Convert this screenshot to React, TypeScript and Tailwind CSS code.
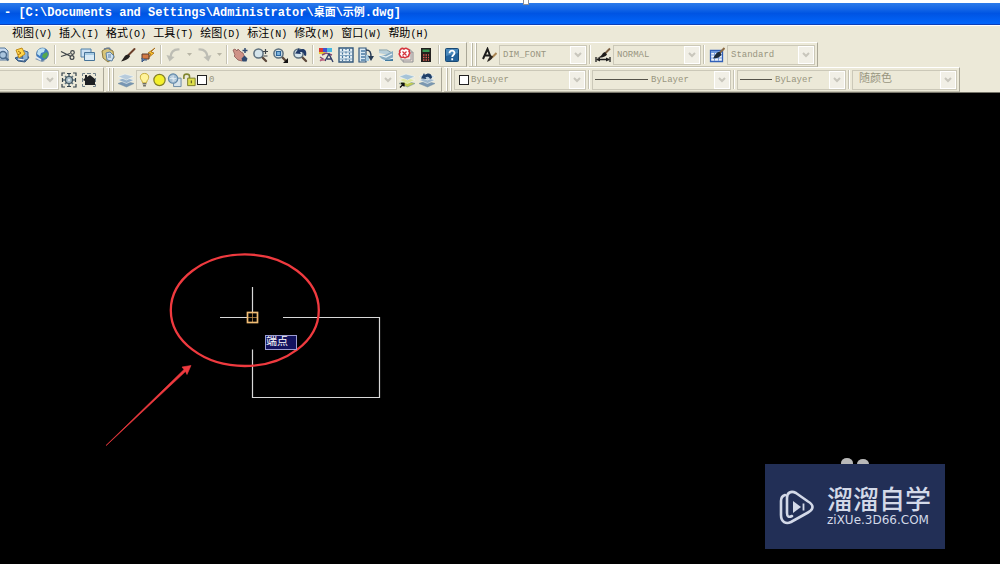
import React from 'react';
import clsx from 'clsx';

interface IconProps {
  children: React.ReactNode;
}

const Icon: React.FC<IconProps> = ({ children }) => (
  <svg viewBox="0 0 16 16" className="size-4 shrink-0" fill="none" aria-hidden="true">
    {children}
  </svg>
);

const stack = (top: string, mid: string, low: string) => (
  <>
    <path d="M0 11.500l7-2.500 9 2.500-7.500 3.500z" fill={low} stroke="#6d8aa0" strokeWidth=".5" />
    <path d="M0 8l7-2.500 9 2.500-7.500 3.500z" fill={mid} stroke="#f4f6f2" strokeWidth=".6" />
    <path d="M0 4.500L7 2l9 2.500L8.500 8z" fill={top} stroke="#f4f6f2" strokeWidth=".6" />
  </>
);

const lens = (
  <>
    <path d="M9.500 9.500l4.500 4.500" stroke="#5d4a3c" strokeWidth="2.400" strokeLinecap="round" />
    <circle cx="6.500" cy="6.500" r="4.600" fill="#d5e4ea" stroke="#5c6f7d" strokeWidth="1.500" />
  </>
);

const icons = {
  preview: (
    <Icon>
      <path d="M2 1h9l3 3v9H2z" fill="#c9dbef" stroke="#55779b" />
      <circle cx="9" cy="8" r="3.500" fill="#a9c4dd" stroke="#4b6a8c" strokeWidth="1.400" />
      <path d="M11.500 10.500l3 3" stroke="#4b6a8c" strokeWidth="2" />
    </Icon>
  ),
  publish: (
    <Icon>
      <path d="M1 11l5-2 9 1-4 5-7-1z" fill="#557fae" stroke="#35577e" />
      <path d="M8 3l6 2v7l-5 2z" fill="#8eb4d6" stroke="#42658d" />
      <path d="M2 3l6-2 3 6-6 4z" fill="#ffd64c" stroke="#c08b18" />
      <path d="M4 4l3 2-3 2" stroke="#a46a10" />
      <path d="M4 12l6 1" stroke="#fff" />
    </Icon>
  ),
  globe: (
    <Icon>
      <path d="M1 12l4-2 6 4-3 1z" fill="#7e96b0" />
      <circle cx="8.500" cy="7" r="6" fill="#3d7cc2" stroke="#2c5c94" strokeWidth=".6" />
      <path d="M4 3c3-2 6-2 7-1l-1 3-3 1-1 3-3-2z" fill="#bfe2f2" />
      <path d="M9 7l4-2 1 3-3 4-3-2z" fill="#55a84e" />
      <path d="M2 10l5 3" stroke="#dfe9f2" strokeWidth="1.600" />
    </Icon>
  ),
  cut: (
    <Icon>
      <path d="M1 4.500l10 5M1 9.500l9-3" stroke="#3e4448" strokeWidth="1.300" />
      <circle cx="12.500" cy="5.500" r="1.800" stroke="#3e4448" strokeWidth="1.200" />
      <circle cx="12" cy="10.500" r="1.900" stroke="#3e4448" strokeWidth="1.200" />
    </Icon>
  ),
  copy: (
    <Icon>
      <path d="M1 2h10v8H1z" fill="#cbe0f2" stroke="#5180a8" />
      <path d="M4.500 5.500h10v8h-10z" fill="#d9eaf5" stroke="#467398" />
      <path d="M5 6h9v2H5z" fill="#a6cbe4" />
    </Icon>
  ),
  paste: (
    <Icon>
      <path d="M2 4l5-3 6 3 1 7-6 4-5-4z" fill="#d8c57a" stroke="#8c7a42" />
      <path d="M4 2l5-1 2 2" stroke="#6e7f92" strokeWidth="1.500" />
      <path d="M6 6l4-1 4 4-2 5-5-1z" fill="#cfe0ef" stroke="#5d81a4" />
      <path d="M8 8h3M8 10h3" stroke="#5d81a4" />
    </Icon>
  ),
  brush: (
    <Icon>
      <path d="M14.500 2L8 8.500" stroke="#6b3f2a" strokeWidth="2" strokeLinecap="round" />
      <path d="M9 7.500l1 2c-2 3-5 4-9 5 2-2 3-5 5-6.500z" fill="#26221f" />
    </Icon>
  ),
  match: (
    <Icon>
      <path d="M15 1L8 6l3 1-4 5 7-6-3-1z" fill="#ffc928" stroke="#a46612" strokeWidth=".8" />
      <path d="M2 7h7v5H2z" fill="#d37a45" stroke="#5a3a2c" />
      <path d="M2 11v4l2-2h3" fill="#5f7fae" stroke="#39557e" />
    </Icon>
  ),
  undo: (
    <Icon>
      <path d="M13.500 2.500C8 2 5 5 4.500 10" stroke="#bdbdb4" strokeWidth="2.200" />
      <path d="M.500 8l8 2-5 4.500z" fill="#bdbdb4" />
    </Icon>
  ),
  redo: (
    <Icon>
      <path d="M2.500 2.500C8 2 11 5 11.500 10" stroke="#bdbdb4" strokeWidth="2.200" />
      <path d="M15.500 8l-8 2 5 4.500z" fill="#bdbdb4" />
    </Icon>
  ),
  pan: (
    <Icon>
      <path d="M1 3l2-1 2 2 1-2 3 3 2 1 2 5-3 3-4-1-4-4 1-1z" fill="#cf9287" stroke="#8c5a55" strokeWidth=".8" />
      <path d="M13 1v5M10.500 3.500h5" stroke="#304a70" strokeWidth="1.500" />
      <path d="M12.500 8.500l3 3-1 3h-4l-1-3z" fill="#304a70" />
    </Icon>
  ),
  zoomRealtime: (
    <Icon>
      {lens}
      <path d="M13.500 2v5M11 4.500h5M11.500 9h4" stroke="#3f4549" strokeWidth="1.200" />
    </Icon>
  ),
  zoomWindow: (
    <Icon>
      {lens}
      <path d="M4.500 4.500h4v4h-4z" fill="#7fb4dd" stroke="#2c669c" strokeWidth="1.200" />
      <path d="M16 11v5h-5z" fill="#111" />
    </Icon>
  ),
  zoomPrevious: (
    <Icon>
      {lens}
      <path d="M14 9c1.500-6-2.500-8.500-6.500-6L7 1 3 6.500l6 .500-1-1.800c2.500-1 4 .800 4 3z" fill="#203a68" />
    </Icon>
  ),
  properties: (
    <Icon>
      <path d="M1 1h4v4H1z" fill="#d93636" />
      <path d="M5 1h4v4H5z" fill="#4352cf" />
      <path d="M9 1h5v4H9z" fill="#46b7e0" />
      <path d="M1 5h6v2H1z" fill="#e7c833" />
      <path d="M4 8l4-2 6 2M2 10l3 2-3 2" stroke="#8a4a70" strokeWidth="1.500" />
      <path d="M7 14l4-7 4 8M9 12h5" stroke="#323d66" strokeWidth="1.400" />
      <path d="M2 13h5" stroke="#c46a82" strokeWidth="1.500" />
    </Icon>
  ),
  designCenter: (
    <Icon>
      <path d="M1 1h14v14H1z" fill="#e7f1f6" stroke="#33587c" strokeWidth="1.400" />
      <path d="M4.500 2v12M8 1v14M11.500 2v12" stroke="#44729a" strokeWidth="1.200" strokeDasharray="2 1.500" />
      <path d="M2 5h12M2 8.500h12M2 12h12" stroke="#6c95b5" strokeWidth=".8" />
    </Icon>
  ),
  toolPalettes: (
    <Icon>
      <path d="M1 1h7v14H1z" fill="#d9e9f3" stroke="#33587c" strokeWidth="1.200" />
      <path d="M3 4h4M3 7h4M3 10h4M3 13h4" stroke="#4b7ba4" strokeWidth="1.500" />
      <path d="M8 8h3v6H8z" fill="#a5c9de" />
      <path d="M8 3c4 0 5 2 5 7" stroke="#283c55" strokeWidth="1.400" />
      <path d="M10 9h6l-3 5z" fill="#283c55" />
    </Icon>
  ),
  sheetSet: (
    <Icon>
      <path d="M1 3l9 1 5 2-5 2-9-2z" fill="#b8cfda" />
      <path d="M1 3h8l5 3" stroke="#7e9dab" />
      <path d="M1 9l6-1 8-4v10H6z" fill="#87abc1" />
      <path d="M1 8l7 2 6-3M2 12l6 2 7-3" stroke="#e8f2f5" strokeWidth="1.300" />
      <path d="M7 13l8-1v2H7z" fill="#40799e" />
    </Icon>
  ),
  markup: (
    <Icon>
      <path d="M5 5h10v10H5z" fill="#e7d9d2" stroke="#8d9094" />
      <path d="M3 3h10v10H3z" fill="#f2e8e2" stroke="#9a9c9e" />
      <path
        d="M2.500 2.500q1.500-2 3.500-.500q2-1.500 3.500 0q2.500.500 1.500 2.500q1.500 1.500 0 3q0 2.500-2.500 2.500q-1.500 1.500-3 0q-3 1-3.500-1.500q-1.500-1.500 0-3q-1-1.500.500-3z"
        fill="#fff"
        stroke="#d5353e"
        strokeWidth="1.600"
      />
      <path d="M4.500 4.500l4 4M8.500 4.500l-4 4" stroke="#d5353e" strokeWidth="1.200" />
    </Icon>
  ),
  calculator: (
    <Icon>
      <path d="M3 1h10v14H3z" fill="#22201f" />
      <path d="M4.500 2.500h7v2.500h-7z" fill="#3b9b57" />
      <path d="M5 8h6M5 10.500h6M5 13h6" stroke="#d85b52" strokeWidth="1.300" strokeDasharray="1.500 1" />
    </Icon>
  ),
  help: (
    <Icon>
      <rect x="1.500" y="1.500" width="13" height="13" rx="1" fill="#24639b" stroke="#174873" />
      <path d="M2 2h12v4L2 9z" fill="#4887ba" />
      <path d="M5.500 6.200c0-3.600 5.300-3.300 5 0-.200 1.800-2.300 1.800-2.300 3.800M8.200 11.300v2" stroke="#fff" strokeWidth="1.800" />
    </Icon>
  ),
  textStyle: (
    <Icon>
      <path d="M2 12L6.500 2l3.500 9M4 8.500h5" stroke="#1c1c1c" strokeWidth="2" />
      <path d="M15.500 6L11 10.500" stroke="#a98452" strokeWidth="2" />
      <path d="M12 9.500c-1 3-3 4-6 5.500 1-3 2-5 4.500-6.500z" fill="#2c2722" />
    </Icon>
  ),
  dimStyle: (
    <Icon>
      <path d="M1 10v5M15 10v5M2 12.500h12" stroke="#1c1c1c" strokeWidth="1.300" />
      <path d="M5 10.500L1 12.500l4 2zM11 10.500l4 2-4 2z" fill="#1c1c1c" />
      <path d="M15 1.500L9.500 7" stroke="#7a5e42" strokeWidth="2" />
      <path d="M10 5l2 2.500c-2 3-6 3-10 3.500 3-1 5-3 6-5z" fill="#1f1c1a" />
    </Icon>
  ),
  tableStyle: (
    <Icon>
      <path d="M1.500 3.500h12v11h-12z" fill="#edf3fb" stroke="#3160b8" strokeWidth="1.300" />
      <path d="M2 4h11v2H2z" fill="#6f9be0" />
      <path d="M2 8h11M2 11h11M5.500 6v8M9.500 6v8" stroke="#7d9fdb" />
      <path d="M15.500 1L10 6.500" stroke="#8b6b45" strokeWidth="2" />
      <path d="M11 5l1.500 2.500c-2 3.500-5 3.500-8.500 4 1.500-2 2.500-5 5-6.500z" fill="#1d2b3a" />
    </Icon>
  ),
  workspace: (
    <Icon>
      <path d="M1 4V1h3M12 1h3v3M15 12v3h-3M4 15H1v-3M6 1.500h4M6 14.500h4M1.500 6v4M14.500 6v4" stroke="#33424a" strokeWidth="1.200" />
      <path d="M8 2v12M2 8h12M4 4l8 8M12 4l-8 8" stroke="#5f7580" strokeWidth="1.600" />
      <circle cx="8" cy="8" r="3.500" fill="#a9bec6" stroke="#42545e" strokeWidth="1.200" />
      <circle cx="8" cy="8" r="1.200" fill="#e6ecea" />
    </Icon>
  ),
  myWorkspace: (
    <Icon>
      <path d="M1.500 4V1.500H4M6 1.500h4M12 1.500h2.500V4M14.500 6v4M14.500 12v2.500H12M1.500 6v4M1.500 12v2.500H4" stroke="#6f7f88" strokeWidth="1" />
      <path d="M2 8l2-2V3h2v2l3-2 5 4v6H4V9z" fill="#1d1f22" />
    </Icon>
  ),
  layers: <Icon>{stack('#b7cbdc', '#94b0c9', '#7796b4')}</Icon>,
  layerCurrent: (
    <Icon>
      {stack('#a6c4d8', '#dfe59b', '#c3cc52')}
      <path d="M1 15.500l3.500-3.500M2 11.500h3v3" stroke="#101010" strokeWidth="1.300" />
    </Icon>
  ),
  layerPrevious: (
    <Icon>
      {stack('#b7cbdc', '#9db6cb', '#7b98b2')}
      <path d="M13 6C13 1 8.500.500 6 3L5 1 2 6.500l5.500.500-1-1.700C9 4 10 5 11 7z" fill="#1f3f68" />
    </Icon>
  ),
  bulb: (
    <Icon>
      <path d="M8 1c5 0 5.500 5 3 7.500L10 11H6L5 8.500C2.500 6 3 1 8 1z" fill="#fff39a" stroke="#c2a832" />
      <path d="M6 12h4M6.500 14.200h3" stroke="#6f6f66" strokeWidth="1.500" />
    </Icon>
  ),
  sun: (
    <Icon>
      <circle cx="8" cy="8" r="6" fill="#f4f02c" stroke="#837f26" strokeWidth="1.300" />
    </Icon>
  ),
  freeze: (
    <Icon>
      <path d="M7 6h8v9H7z" fill="#d7e3ea" stroke="#6687a3" />
      <circle cx="6.500" cy="6.500" r="5" fill="#a8c1d5" stroke="#5f86a8" strokeWidth="1.200" />
      <path d="M6.500 3v7M3 6.500h7M4 4l5 5" stroke="#e4edf3" />
    </Icon>
  ),
  lock: (
    <Icon>
      <path d="M2 7V4c0-3 6-3 6 0v4" stroke="#7f8530" strokeWidth="1.700" />
      <path d="M6 6h8v8H6z" fill="#dfe04c" stroke="#7b7c2d" />
      <path d="M10 8.500v3" stroke="#6b6b22" strokeWidth="1.400" />
    </Icon>
  ),
};

type IconName = keyof typeof icons;

const ToolButton: React.FC<{ icon: IconName; label: string }> = ({ icon, label }) => (
  <button type="button" aria-label={label} className="flex w-5 shrink-0 items-center justify-center">
    {icons[icon]}
  </button>
);

const Separator = () => (
  <span className="flex w-1.5 shrink-0 justify-center self-stretch py-0.5">
    <span className="w-0.5 border-r border-l border-r-white border-l-[#c6c3b3]" />
  </span>
);

const MoreButton: React.FC<{ label: string }> = ({ label }) => (
  <button type="button" aria-label={label} className="flex w-2.5 shrink-0 items-center justify-center">
    <svg viewBox="0 0 5 3" className="h-[3px] w-[5px]" aria-hidden="true">
      <path d="M0 0h5L2.500 3z" fill="#b8b5a5" />
    </svg>
  </button>
);

const Grip = () => (
  <span className="mr-0.5 flex w-1.5 shrink-0 justify-between self-stretch">
    <span className="w-0.5 border-r border-l border-r-[#bab7a6] border-l-white" />
    <span className="w-0.5 border-r border-l border-r-[#bab7a6] border-l-white" />
  </span>
);

interface ComboProps {
  label: string;
  options: string[];
  className: string;
  selectClassName?: string;
  children?: React.ReactNode;
}

const Combo: React.FC<ComboProps> = ({ label, options, className, selectClassName = 'pl-0.5 pt-0.5 text-[9px]', children }) => (
  <div className={clsx('relative flex h-5 shrink-0 items-center border border-[#cbc8b8] bg-[#ece9d8]', className)}>
    {children}
    <select
      aria-label={label}
      className={clsx('h-full min-w-0 flex-1 appearance-none pr-4 text-[#98957f] outline-none', selectClassName)}
    >
      {options.map(option => (
        <option key={option}>{option}</option>
      ))}
    </select>
    <span className="pointer-events-none absolute inset-y-0 right-0 flex w-4 items-center justify-center border border-white bg-[#f1efe6]">
      <svg viewBox="0 0 8 6" className="h-1.5 w-2" fill="none" aria-hidden="true">
        <path d="M1 1l3 3 3-3" stroke="#c8c6bc" strokeWidth="2" />
      </svg>
    </span>
  </div>
);

const Toolbar: React.FC<{ label: string; children: React.ReactNode; className?: string }> = ({
  label,
  children,
  className,
}) => (
  <div
    role="toolbar"
    aria-label={label}
    className={clsx(
      'flex h-[25px] shrink-0 items-center border-t border-r border-b border-t-white border-r-[#aaa797] border-b-[#c4c1b0]',
      className,
    )}
  >
    {children}
  </div>
);

const Swatch = () => <span className="size-2.5 shrink-0 border border-[#222] bg-white" />;

const menus = [
  { name: '视图', hotkey: 'V' },
  { name: '插入', hotkey: 'I' },
  { name: '格式', hotkey: 'O' },
  { name: '工具', hotkey: 'T' },
  { name: '绘图', hotkey: 'D' },
  { name: '标注', hotkey: 'N' },
  { name: '修改', hotkey: 'M' },
  { name: '窗口', hotkey: 'W' },
  { name: '帮助', hotkey: 'H' },
];

const TitleBar = () => (
  <header className="relative border-t-[3px] border-b border-white">
    <h1 className="h-[22px] overflow-hidden border-b border-[#0b3fb8] bg-linear-to-b from-[#2b7bea] via-[#0054e3] to-[#0366fb] pl-1 text-xs leading-[21px] font-bold whitespace-pre text-white">
      - [C:\Documents and Settings\Administrator\<span className="text-[11px]">桌面</span>\
      <span className="text-[11px]">示例</span>.dwg]
    </h1>
    {/* Resize handle on the window's top edge */}
    <span className="absolute -top-[3px] left-[523px] h-[5px] w-1.5 border border-t-0 border-[#8d8f96] bg-white" />
  </header>
);

const MenuBar = () => (
  <nav className="flex h-4 items-center gap-[7px] pl-3 text-[10px] text-black">
    {menus.map(menu => (
      <button key={menu.hotkey} type="button" className="shrink-0 leading-4 whitespace-nowrap">
        <span className="text-[11px]">{menu.name}</span>({menu.hotkey})
      </button>
    ))}
  </nav>
);

const StandardRow = () => (
  <div className="flex gap-0.5">
    <Toolbar label="标准" className="-ml-2 pr-1">
      <ToolButton icon="preview" label="打印预览" />
      <ToolButton icon="publish" label="发布" />
      <ToolButton icon="globe" label="三维 DWF" />
      <Separator />
      <ToolButton icon="cut" label="剪切" />
      <ToolButton icon="copy" label="复制" />
      <ToolButton icon="paste" label="粘贴" />
      <ToolButton icon="brush" label="特性匹配" />
      <ToolButton icon="match" label="块编辑器" />
      <Separator />
      <ToolButton icon="undo" label="放弃" />
      <MoreButton label="放弃列表" />
      <ToolButton icon="redo" label="重做" />
      <MoreButton label="重做列表" />
      <Separator />
      <ToolButton icon="pan" label="实时平移" />
      <ToolButton icon="zoomRealtime" label="实时缩放" />
      <ToolButton icon="zoomWindow" label="窗口缩放" />
      <ToolButton icon="zoomPrevious" label="缩放上一个" />
      <Separator />
      <ToolButton icon="properties" label="特性" />
      <ToolButton icon="designCenter" label="设计中心" />
      <ToolButton icon="toolPalettes" label="工具选项板" />
      <ToolButton icon="sheetSet" label="图纸集管理器" />
      <ToolButton icon="markup" label="标记集管理器" />
      <ToolButton icon="calculator" label="快速计算器" />
      <Separator />
      <ToolButton icon="help" label="帮助" />
    </Toolbar>
    <Toolbar label="样式" className="pr-0.5 pl-0.5">
      <Grip />
      <ToolButton icon="textStyle" label="文字样式管理器" />
      <Combo label="文字样式" options={['DIM_FONT', 'Standard']} className="w-[88px] pl-px" />
      <Separator />
      <ToolButton icon="dimStyle" label="标注样式管理器" />
      <Combo label="标注样式" options={['NORMAL', 'Standard']} className="w-[88px] pl-px" />
      <Separator />
      <ToolButton icon="tableStyle" label="表格样式管理器" />
      <Combo label="表格样式" options={['Standard']} className="w-[88px] pl-px" />
    </Toolbar>
  </div>
);

const LayerRow = () => (
  <div className="flex gap-0.5">
    <Toolbar label="工作空间" className="pr-1">
      <Combo label="工作空间列表" options={['']} className="w-[59px] border-l-0" />
      <ToolButton icon="workspace" label="工作空间设置" />
      <ToolButton icon="myWorkspace" label="我的工作空间" />
    </Toolbar>
    <Toolbar label="图层" className="pr-1 pl-0.5">
      <Grip />
      <ToolButton icon="layers" label="图层特性管理器" />
      <Combo label="图层列表" options={['0']} className="w-[261px]">
        <span className="flex shrink-0 items-center [&>svg]:w-[15px]">
          {icons.bulb}
          {icons.sun}
          {icons.freeze}
          {icons.lock}
          <Swatch />
        </span>
      </Combo>
      <ToolButton icon="layerCurrent" label="将对象的图层置为当前" />
      <ToolButton icon="layerPrevious" label="上一个图层" />
    </Toolbar>
    <Toolbar label="对象特性" className="pr-0.5 pl-0.5">
      <Grip />
      <Combo label="颜色" options={['ByLayer', 'ByBlock']} className="w-[132px] pl-1">
        <Swatch />
      </Combo>
      <Separator />
      <Combo label="线型" options={['ByLayer', 'ByBlock']} className="w-[139px] pl-0.5">
        <span className="mr-px w-[53px] shrink-0 border-t border-[#55534a]" />
      </Combo>
      <Separator />
      <Combo label="线宽" options={['ByLayer', 'ByBlock']} className="w-[109px] pl-0.5">
        <span className="mr-px w-8 shrink-0 border-t border-[#55534a]" />
      </Combo>
      <Separator />
      <Combo label="打印样式" options={['随颜色']} className="w-[105px] pl-1" selectClassName="pl-0.5 text-[11px]" />
    </Toolbar>
  </div>
);

const Drawing = () => (
  <svg viewBox="0 93 400 360" className="h-[360px] w-[400px]" fill="none" role="img" aria-label="图形">
    <g stroke="#d9d9d9" strokeWidth="1.200">
      <path d="M283 317.500h96.500v80h-127v-48" />
      <path d="M252.500 287v25M220 317.500h27" />
    </g>
    <path d="M252.500 313v9M248 317.500h9" stroke="#b98a4a" strokeWidth=".8" />
    <rect x="247.500" y="312.500" width="10" height="10" stroke="#f0bc74" strokeWidth="1.700" />
    <ellipse cx="244.800" cy="310.200" rx="74" ry="55.800" stroke="#ef3a3f" strokeWidth="2.300" />
    <path d="M106 445.500l78-76-2-2.500 9-1.500-4 9-1.500-3L106.800 445z" fill="#ef3a3f" stroke="#ef3a3f" strokeWidth=".6" />
  </svg>
);

const Watermark = () => (
  <div className="absolute right-[55px] bottom-[15px]">
    <svg viewBox="0 0 32 8" className="ml-[74px] h-2 w-8" aria-hidden="true">
      <ellipse cx="8" cy="7" rx="6" ry="5" fill="#b9b9b9" />
      <ellipse cx="24" cy="8" rx="6" ry="5" fill="#b9b9b9" />
    </svg>
    <div className="flex h-[85px] w-[180px] items-center gap-3 bg-[#222f56] pl-3.5 text-[#d3d9e8]">
      <svg viewBox="0 0 36 36" className="size-9 shrink-0" fill="none" aria-hidden="true">
        <path
          d="M6 6C3 7 2 9 2 12v14c0 7 5 9.500 10 7l17-9.500c6-3.500 6-7.500 0-11L17 4c-5-2.500-9-.500-9 5v15c0 4 2 4.500 5 3"
          stroke="currentColor"
          strokeWidth="2.600"
          strokeLinecap="round"
        />
        <path d="M14 12v12l8-6z" fill="currentColor" />
        <path d="M24.500 14.500v7" stroke="currentColor" strokeWidth="1.800" />
      </svg>
      <div className="flex flex-col gap-1.5 font-['Noto_Sans_CJK_SC',sans-serif] whitespace-nowrap">
        <p className="text-[26px] leading-5 font-medium">溜溜自学</p>
        <p className="font-['DejaVu_Sans','Noto_Sans_CJK_SC',sans-serif] text-xs leading-3">ziXUe.3D66.COM</p>
      </div>
    </div>
  </div>
);

const App = () => (
  <div className="flex min-h-screen flex-col overflow-hidden bg-[#ece9d8] font-['Liberation_Mono','Noto_Sans_CJK_SC',monospace]">
    <TitleBar />
    <MenuBar />
    <StandardRow />
    <LayerRow />
    <main className="relative flex-1 border-t border-[#77756a] bg-black">
      <Drawing />
      {/* Object snap tooltip next to the cursor */}
      <span className="absolute top-[242px] left-[265px] h-[15px] w-8 overflow-hidden border border-[#9c9cd0] bg-[#12125e] text-[11px] leading-3 whitespace-nowrap text-white">
        端点
      </span>
      <Watermark />
    </main>
  </div>
);

export default App;
